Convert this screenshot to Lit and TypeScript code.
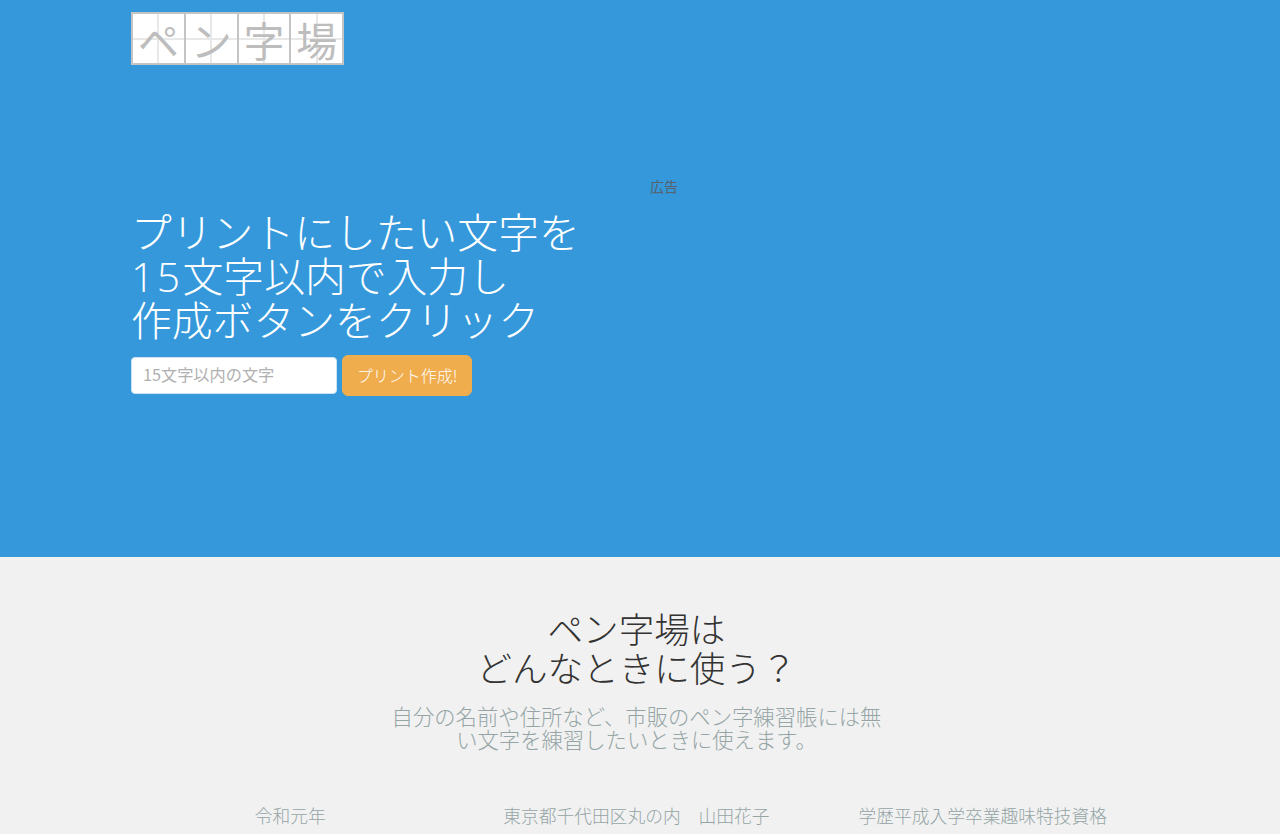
import { LitElement, html, css } from "lit";
import { customElement } from "lit/decorators.js";

@customElement("app-root")
export class AppRoot extends LitElement {
  static styles = css`
    :host {
      display: block;
      height: 834px;
      overflow: hidden;
      font-family: "Noto Sans CJK JP", "Noto Sans", sans-serif;
      font-weight: 300;
    }
    .hero {
      height: 557px;
      background: #3498db;
      box-sizing: border-box;
      padding: 12px 0 0 131px;
    }
    .logo {
      display: grid;
      grid-template-columns: repeat(4, 52.75px);
      width: max-content;
      border: 2px solid #c4c4c4;
      border-right-width: 0;
      background: #fff;
    }
    .cell {
      height: 49px;
      box-sizing: border-box;
      border-right: 2px solid #c4c4c4;
      display: flex;
      align-items: center;
      justify-content: center;
      font-size: 41px;
      line-height: 60px;
      font-weight: 400;
      color: #bdbdbd;
      background:
        linear-gradient(#e8e8e8, #e8e8e8) center / 100% 2px no-repeat,
        linear-gradient(#e8e8e8, #e8e8e8) center / 2px 100% no-repeat,
        #fff;
    }
    .hero-body {
      display: grid;
      grid-template-columns: 519px auto;
      margin-top: 111px;
    }
    .ad {
      font-size: 14px;
      line-height: 20px;
      color: #56616b;
      font-weight: 400;
    }
    .spacer {
      height: 20px;
    }
    h1 {
      margin: 13px 0 0;
      font-size: 40.8px;
      line-height: 44px;
      font-weight: 300;
      color: #fff;
    }
    .digits {
      font-family: "Open Sans", sans-serif;
      letter-spacing: 2.5px;
      line-height: 0;
    }
    .form {
      display: flex;
      align-items: center;
      gap: 5px;
      margin-top: 14px;
    }
    input {
      width: 206px;
      height: 37px;
      box-sizing: border-box;
      padding: 0 11px 3px;
      border: 1px solid #cfe2f3;
      border-radius: 4px;
      background: #fff;
      color: #333;
      font-family: inherit;
      font-size: 16.2px;
      font-weight: 400;
      outline: none;
    }
    input::placeholder {
      color: #b0b0b0;
      opacity: 1;
    }
    .btn {
      width: 130px;
      height: 41px;
      box-sizing: border-box;
      border: 1px solid #f0ad4e;
      border-radius: 6px;
      background: #f0ad4e;
      color: #fff;
      font-size: 16px;
      font-weight: 300;
      font-family: inherit;
      padding: 0 0 2px;
    }
    .info {
      height: 277px;
      background: #f1f1f1;
      box-sizing: border-box;
      padding-top: 52px;
      width: 100%;
    }
    .inner {
      width: 1039px;
      margin-left: 117px;
      text-align: center;
    }
    h2 {
      margin: 0;
      font-size: 35.6px;
      line-height: 38.5px;
      font-weight: 300;
      color: #333;
    }
    .lead {
      width: 500px;
      margin: 18px auto 0;
      font-size: 21.35px;
      line-height: 23px;
      color: #95a5a6;
    }
    .cols {
      display: grid;
      grid-template-columns: repeat(3, 1fr);
      margin-top: 53px;
      font-size: 17.75px;
      line-height: 24px;
      color: #95a5a6;
    }
  `;

  render() {
    return html`
      <section class="hero">
        <div class="logo">
          ${["ペ", "ン", "字", "場"].map((c) => html`<div class="cell">${c}</div>`)}
        </div>
        <div class="hero-body">
          <div>
            <div class="spacer"></div>
            <h1>プリントにしたい文字を<br /><span class="digits">15</span>文字以内で入力し<br />作成ボタンをクリック</h1>
            <div class="form">
              <input type="text" placeholder="15文字以内の文字" />
              <button class="btn">プリント作成!</button>
            </div>
          </div>
          <div class="ad">広告</div>
        </div>
      </section>
      <section class="info">
        <div class="inner">
          <h2>ペン字場は<br />どんなときに使う？</h2>
          <p class="lead">自分の名前や住所など、市販のペン字練習帳には無い文字を練習したいときに使えます。</p>
          <div class="cols">
            <div>令和元年</div>
            <div>東京都千代田区丸の内　山田花子</div>
            <div>学歴平成入学卒業趣味特技資格</div>
          </div>
        </div>
      </section>
    `;
  }
}
